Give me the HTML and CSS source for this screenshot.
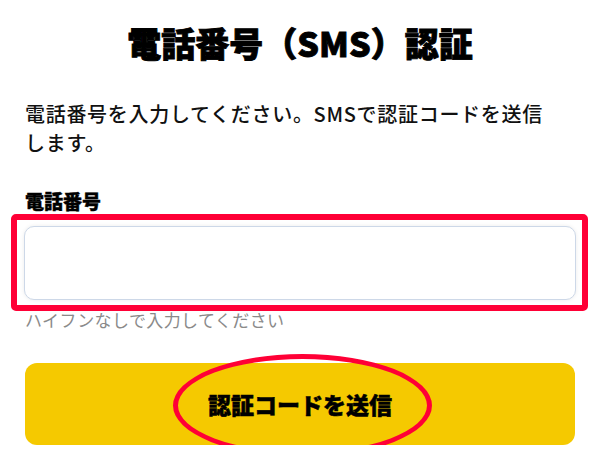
FILE: index.html
```html
<!DOCTYPE html>
<html lang="ja">
<head>
<meta charset="utf-8">
<title>電話番号（SMS）認証</title>
<link rel="stylesheet" href="styles.css">
</head>
<body>
<main class="page">
  <h1 class="title">電話番号（SMS）認証</h1>
  <p class="lead">電話番号を入力してください。SMSで認証コードを送信<br>します。</p>
  <label class="label" for="tel">電話番号</label>
  <div class="field">
    <input class="input" id="tel" type="tel">
    <span class="mark-box" aria-hidden="true"></span>
  </div>
  <p class="hint">ハイフンなしで入力してください</p>
  <button class="submit" type="button">
    <span class="submit-text">認証コードを送信</span>
    <span class="mark-ellipse" aria-hidden="true"></span>
  </button>
</main>
</body>
</html>
```

FILE: styles.css
```css
html, body {
  margin: 0;
  padding: 0;
  background: #ffffff;
}

body {
  font-family: "Noto Sans CJK JP", "Noto Sans", sans-serif;
  color: #111111;
}

.page {
  display: flex;
  flex-direction: column;
  padding: 21px 25px 0;
}

.title {
  margin: 0;
  font-size: 34px;
  line-height: 43px;
  font-weight: 900;
  text-align: center;
  color: #000000;
  -webkit-text-stroke: 0.9px #000000;
}

.lead {
  margin: 35px 0 0;
  font-size: 20px;
  line-height: 29px;
  font-weight: 500;
  letter-spacing: 0.7px;
  color: #111111;
}

.label {
  margin-top: 31px;
  font-size: 19px;
  line-height: 26px;
  font-weight: 900;
  color: #000000;
  -webkit-text-stroke: 0.4px #000000;
}

.field {
  position: relative;
  margin: 12px -1px 0;
}

.input {
  display: block;
  box-sizing: border-box;
  width: 100%;
  height: 74px;
  margin: 0;
  border: 1px solid #cdd8e8;
  border-radius: 10px;
  background: #ffffff;
  box-shadow: 0 0 4px rgba(0, 0, 0, 0.08);
  font: inherit;
  outline: none;
}

.mark-box {
  position: absolute;
  left: -13px;
  right: -12px;
  top: -12px;
  bottom: -11px;
  border: 6px solid #ff0036;
  border-radius: 5px;
  pointer-events: none;
}

.hint {
  margin: 8px 0 0;
  font-size: 17px;
  line-height: 24px;
  letter-spacing: 0.4px;
  color: #8a8a8a;
}

.submit {
  position: relative;
  display: flex;
  align-items: center;
  justify-content: center;
  height: 82px;
  margin-top: 31px;
  padding: 0;
  border: none;
  border-radius: 12px;
  background: #f5c900;
  font-family: inherit;
  cursor: pointer;
}

.submit-text {
  font-size: 23px;
  line-height: 30px;
  font-weight: 900;
  color: #000000;
  -webkit-text-stroke: 0.5px #000000;
}

.mark-ellipse {
  position: absolute;
  left: 148px;
  top: -9px;
  width: 249px;
  height: 93px;
  border: 5px solid #ff0036;
  border-radius: 50%;
  pointer-events: none;
}
```
